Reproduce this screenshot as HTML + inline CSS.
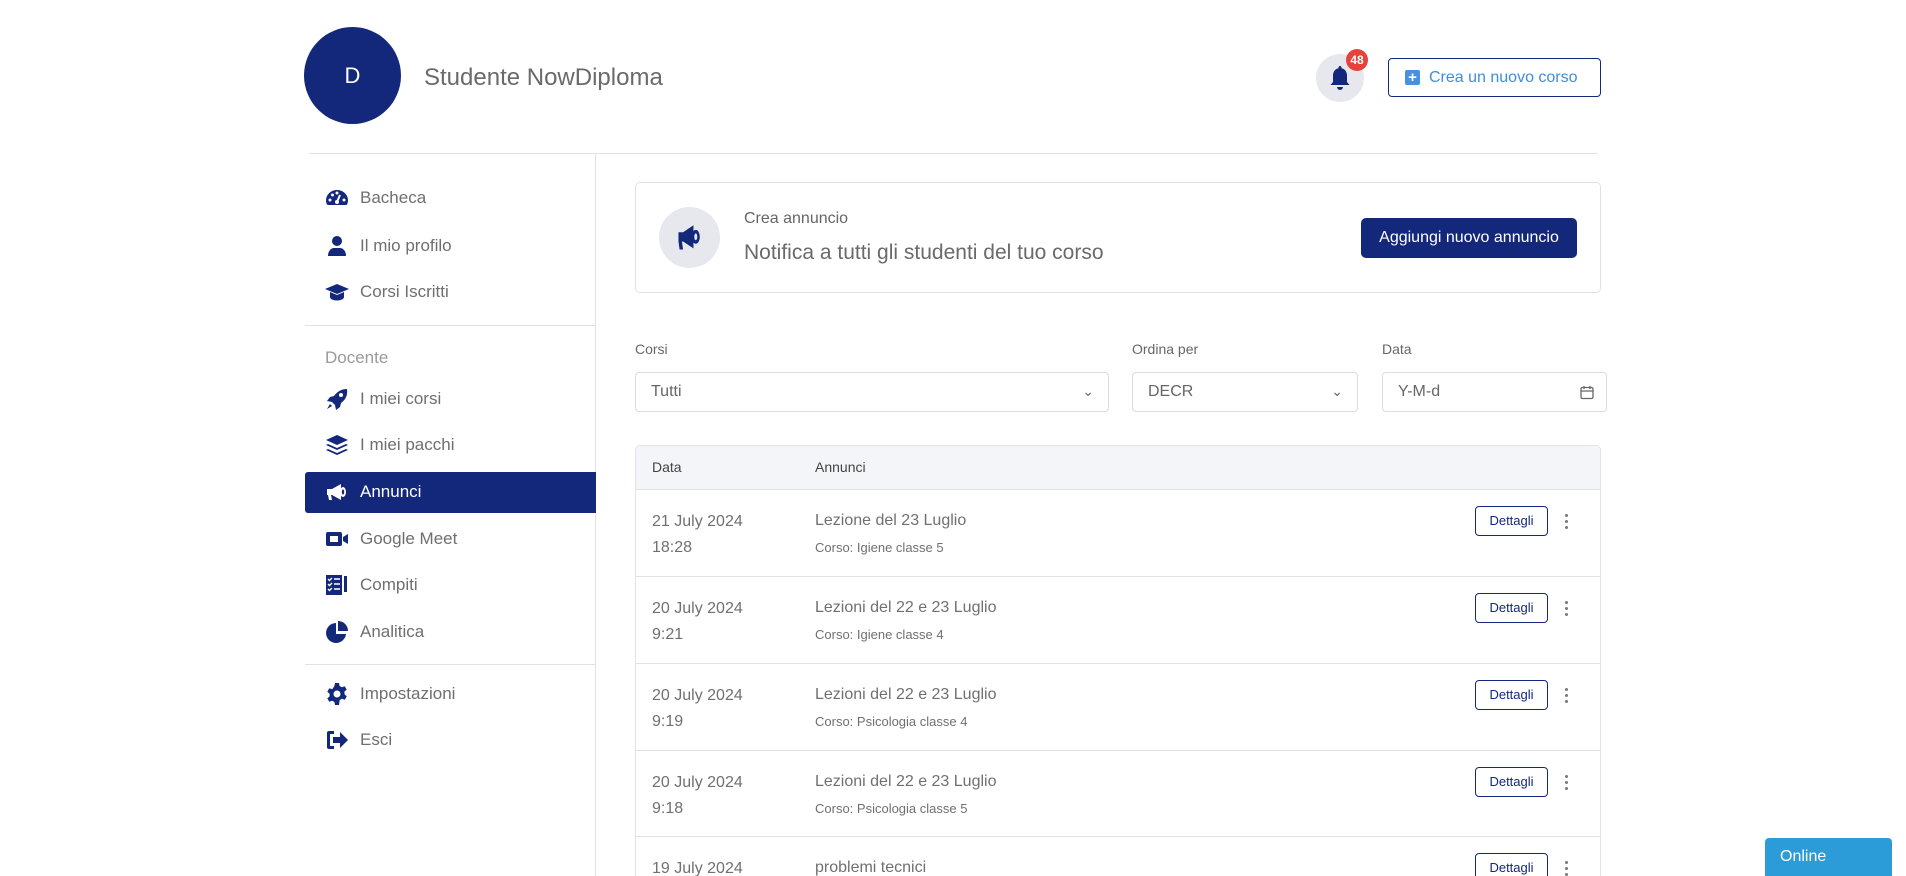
<!DOCTYPE html>
<html style="width:1906px;height:876px;overflow:hidden"><head><meta charset="utf-8"><style>
*{box-sizing:border-box;margin:0;padding:0}
body{width:1906px;height:876px;overflow:hidden;background:#fff;font-family:"Liberation Sans",sans-serif;color:#6e6e6e;position:relative}
.abs{position:absolute}
.navy{background:#13287a}
.side{position:absolute;left:305px;width:291px;height:42px;display:flex;align-items:center;font-size:17px;color:#6f6f6f}
.side svg{position:absolute;left:20px;width:24px;height:24px;fill:#13287a}
.side span{position:absolute;left:55px}
.hr{position:absolute;height:1px;background:#e2e2e2}
.lbl{position:absolute;top:341px;font-size:14px;color:#666}
.sel{position:absolute;top:372px;height:40px;border:1px solid #dcdcdc;border-radius:4px;font-size:16px;color:#666;padding:0 15px;line-height:38px}
.row{position:absolute;left:635px;width:966px;height:87px;border-top:1px solid #e2e2e2}
.row .d{position:absolute;left:17px;top:19px;font-size:16px;line-height:26px;color:#707070}
.row .t{position:absolute;left:180px;top:22px;font-size:16px;color:#707070}
.row .c{position:absolute;left:180px;top:50px;font-size:13px;color:#707070}
.row .b{position:absolute;left:840px;top:16px;width:73px;height:30px;border:1px solid #13287a;border-radius:4px;font-size:13px;color:#13287a;text-align:center;line-height:28px}
.row .k{position:absolute;left:930px;top:24px;width:4px}
.row .k i{display:block;width:3px;height:3px;border-radius:50%;background:#777;margin-bottom:3px}
</style></head><body>
<div class="abs navy" style="left:304px;top:27px;width:97px;height:97px;border-radius:50%;color:#fff;font-size:22px;text-align:center;line-height:97px">D</div>
<div class="abs" style="left:424px;top:64px;font-size:24px;color:#6a6a6a">Studente NowDiploma</div>
<div class="abs" style="left:1316px;top:54px;width:48px;height:48px;border-radius:50%;background:#e6e8ee"></div>
<svg class="abs" style="left:1328px;top:65px" width="24" height="26" viewBox="0 0 24 26"><path d="M12 1c-1 0-1.5.7-1.5 1.5v.8C7 4 5 7 5 10.5V17l-2.5 3h19L19 17v-6.5C19 7 17 4 13.5 3.3v-.8C13.5 1.7 13 1 12 1zM9 22a3 3 0 0 0 6 0z" fill="#13287a"/></svg>
<div class="abs" style="left:1346px;top:49px;width:22px;height:22px;border-radius:50%;background:#e8413a;color:#fff;font-size:12px;font-weight:bold;text-align:center;line-height:22px">48</div>
<div class="abs" style="left:1388px;top:58px;width:213px;height:39px;border:1px solid #13287a;border-radius:4px;font-size:16px;color:#3d8ee0;line-height:37px;padding-left:40px">Crea un nuovo corso</div>
<div class="abs" style="left:1405px;top:70px;width:15px;height:15px;background:#4a90e2;border-radius:2px;color:#fff;font-size:15px;font-weight:bold;line-height:15px;text-align:center">+</div>
<div class="hr" style="left:309px;top:153px;width:1289px"></div>
<div class="abs" style="left:595px;top:154px;width:1px;height:722px;background:#e2e2e2"></div>

<div class="side" style="top:177px"><svg viewBox="0 0 24 24"><path d="M12 4C5.5 4 1 9 1 14.5c0 2 .5 3.5 1.5 4.5h19c1-1 1.5-2.5 1.5-4.5C23 9 18.5 4 12 4z"/><circle cx="5" cy="14" r="1.5" fill="#fff"/><circle cx="7.5" cy="9" r="1.5" fill="#fff"/><circle cx="12" cy="7" r="1.5" fill="#fff"/><circle cx="19" cy="14" r="1.5" fill="#fff"/><path d="M15 9l-3 7" stroke="#fff" stroke-width="2"/><circle cx="12" cy="16" r="2" fill="#fff"/></svg><span>Bacheca</span></div>
<div class="side" style="top:225px"><svg viewBox="0 0 24 24"><circle cx="12" cy="7" r="5"/><path d="M3 22c0-5 3-8 6-8h6c3 0 6 3 6 8z"/></svg><span>Il mio profilo</span></div>
<div class="side" style="top:271px"><svg viewBox="0 0 24 24"><path d="M12 4L0 9l12 5 12-5z"/><path d="M5 12v5c0 2 3 3.5 7 3.5s7-1.5 7-3.5v-5l-7 3z"/></svg><span>Corsi Iscritti</span></div>
<div class="hr" style="left:305px;top:325px;width:291px"></div>
<div class="abs" style="left:325px;top:348px;font-size:17px;color:#9a9a9a">Docente</div>
<div class="side" style="top:378px"><svg viewBox="0 0 24 24"><path d="M22 2c-6 0-10 3-13 7l-4 1-3 4 5 1 3 3 1 5 4-3 1-4c4-3 7-7 6-14zM16 6a2 2 0 1 1 0 4 2 2 0 0 1 0-4z"/><path d="M5 17l-3 5 5-3z"/></svg><span>I miei corsi</span></div>
<div class="side" style="top:424px"><svg viewBox="0 0 24 24"><path d="M12 2L1 7l11 5 11-5z"/><path d="M3 11l-2 1 11 5 11-5-2-1-9 4z"/><path d="M3 16l-2 1 11 5 11-5-2-1-9 4z"/></svg><span>I miei pacchi</span></div>
<div class="abs navy" style="left:305px;top:472px;width:291px;height:41px;border-radius:3px 0 0 3px"></div>
<div class="side" style="top:471px;color:#fff"><svg viewBox="0 0 24 24" style="fill:#fff"><path d="M2 9h5l9-5v16l-9-5H6l1 5H4l-1-5H2z"/><ellipse cx="18" cy="12" rx="3" ry="5"/><ellipse cx="18" cy="12" rx="1.2" ry="2.5" fill="#13287a"/></svg><span>Annunci</span></div>
<div class="side" style="top:518px"><svg viewBox="0 0 24 24"><rect x="1" y="5" width="16" height="14" rx="2"/><path d="M18 10l5-3v10l-5-3z"/><rect x="5" y="9" width="8" height="6" fill="#fff"/></svg><span>Google Meet</span></div>
<div class="side" style="top:564px"><svg viewBox="0 0 24 24"><path d="M1 2h16v20H1z"/><path d="M3 6l1.5 1.5L7 5M3 11l1.5 1.5L7 10M3 16l1.5 1.5L7 15M9 6h6M9 11h6M9 16h6" stroke="#fff" stroke-width="1.4" fill="none"/><rect x="19" y="3" width="3" height="16"/></svg><span>Compiti</span></div>
<div class="side" style="top:611px"><svg viewBox="0 0 24 24"><path d="M11 3a10 10 0 1 0 10 11H11z"/><path d="M13 1v10h10A10 10 0 0 0 13 1z"/></svg><span>Analitica</span></div>
<div class="hr" style="left:305px;top:664px;width:291px"></div>
<div class="side" style="top:673px"><svg viewBox="0 0 24 24"><path d="M10 1h4l.6 3 2.3 1.3 2.8-1.1 2 3.4-2.3 2 .1 2.7 2.3 2-2 3.4-2.9-1-2.2 1.3L14 23h-4l-.6-3-2.3-1.3-2.8 1.1-2-3.4 2.3-2v-2.7l-2.3-2 2-3.4 2.9 1L9.4 4z"/><circle cx="12" cy="12" r="3.5" fill="#fff"/></svg><span>Impostazioni</span></div>
<div class="side" style="top:719px"><svg viewBox="0 0 24 24"><path d="M9 3H4a2 2 0 0 0-2 2v14a2 2 0 0 0 2 2h5v-3H5V6h4z"/><path d="M8 9h7V4l8 8-8 8v-5H8z"/></svg><span>Esci</span></div>

<div class="abs" style="left:635px;top:182px;width:966px;height:111px;border:1px solid #e0e0e0;border-radius:5px"></div>
<div class="abs" style="left:659px;top:207px;width:61px;height:61px;border-radius:50%;background:#e6e8ee"></div>
<svg class="abs" style="left:676px;top:223px" width="28" height="30" viewBox="0 0 24 26"><path d="M2 8h4l9-6v20l-9-6H5l1 7H3l-1-7z" fill="#13287a"/><ellipse cx="17" cy="12" rx="3.5" ry="6" fill="#13287a"/><ellipse cx="17" cy="12" rx="1.3" ry="3" fill="#e6e8ee"/></svg>
<div class="abs" style="left:744px;top:210px;font-size:16px;color:#666">Crea annuncio</div>
<div class="abs" style="left:744px;top:241px;font-size:21px;color:#6a6a6a">Notifica a tutti gli studenti del tuo corso</div>
<div class="abs navy" style="left:1361px;top:218px;width:216px;height:40px;border-radius:5px;color:#fff;font-size:16px;text-align:center;line-height:40px">Aggiungi nuovo annuncio</div>

<div class="lbl" style="left:635px">Corsi</div>
<div class="lbl" style="left:1132px">Ordina per</div>
<div class="lbl" style="left:1382px">Data</div>
<div class="sel" style="left:635px;width:474px">Tutti<span style="position:absolute;right:14px;top:-1px;font-size:14px">&#8964;</span></div>
<div class="sel" style="left:1132px;width:226px">DECR<span style="position:absolute;right:14px;top:-1px;font-size:14px">&#8964;</span></div>
<div class="sel" style="left:1382px;width:225px">Y-M-d
<svg style="position:absolute;right:12px;top:12px" width="14" height="15" viewBox="0 0 14 15"><rect x="1" y="2.5" width="12" height="11" rx="1.5" fill="none" stroke="#666" stroke-width="1.3"/><path d="M1 6h12M4 1v3M10 1v3" stroke="#666" stroke-width="1.3"/></svg></div>

<div class="abs" style="left:635px;top:445px;width:966px;height:431px;border:1px solid #e2e2e2;border-bottom:none;border-radius:5px 5px 0 0"></div>
<div class="abs" style="left:636px;top:446px;width:964px;height:43px;background:#f4f5f8;border-radius:5px 5px 0 0"></div>
<div class="abs" style="left:652px;top:459px;font-size:14px;color:#444">Data</div>
<div class="abs" style="left:815px;top:459px;font-size:14px;color:#444">Annunci</div>

<div class="row" style="top:489px"><div class="d">21 July 2024<br>18:28</div><div class="t">Lezione del 23 Luglio</div><div class="c">Corso: Igiene classe 5</div><div class="b">Dettagli</div><div class="k"><i></i><i></i><i></i></div></div>
<div class="row" style="top:576px"><div class="d">20 July 2024<br>9:21</div><div class="t">Lezioni del 22 e 23 Luglio</div><div class="c">Corso: Igiene classe 4</div><div class="b">Dettagli</div><div class="k"><i></i><i></i><i></i></div></div>
<div class="row" style="top:663px"><div class="d">20 July 2024<br>9:19</div><div class="t">Lezioni del 22 e 23 Luglio</div><div class="c">Corso: Psicologia classe 4</div><div class="b">Dettagli</div><div class="k"><i></i><i></i><i></i></div></div>
<div class="row" style="top:750px"><div class="d">20 July 2024<br>9:18</div><div class="t">Lezioni del 22 e 23 Luglio</div><div class="c">Corso: Psicologia classe 5</div><div class="b">Dettagli</div><div class="k"><i></i><i></i><i></i></div></div>
<div class="row" style="top:836px;height:40px"><div class="d">19 July 2024</div><div class="t">problemi tecnici</div><div class="b">Dettagli</div><div class="k"><i></i><i></i><i></i></div></div>

<div class="abs" style="left:1765px;top:838px;width:127px;height:38px;background:#2b9cd8;border-radius:4px 4px 0 0;color:#fff;font-size:16px;padding:10px 0 0 15px">Online</div>
</body></html>
